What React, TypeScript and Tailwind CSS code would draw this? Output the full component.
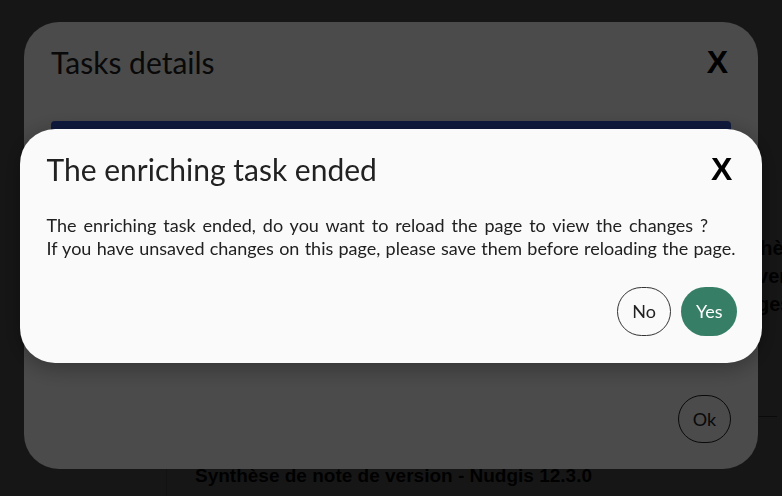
const CloseX = ({ className = '' }: { className?: string }) => (
  <button
    type="button"
    className={`font-['Liberation_Sans',Arial,sans-serif] text-[32px] font-bold leading-[36px] text-black ${className}`}
  >
    X
  </button>
);

// page behind both modals, only a few bits of it show through
const BackgroundPage = () => (
  <div className="flex h-full w-full font-['Liberation_Sans',Arial,sans-serif] text-[#111]">
    <aside className="w-[166px] shrink-0" />
    <main className="flex flex-1">
      <section className="flex w-[547px] flex-col justify-end">
        <article className="flex h-[190px] flex-col justify-end border-l border-[#c8c8c8] pb-[8px] pl-[28px]">
          <h1 className="text-[19px] font-bold leading-[24px]">
            Synthèse de note de version - Nudgis 12.3.0
          </h1>
        </article>
      </section>
      <section className="flex-1 overflow-hidden pt-[234px] pl-[4px] text-[20px] font-semibold leading-[28px] whitespace-nowrap">
        <p>Synthèse</p>
        <p>Les versions</p>
        <p>Les gestions</p>
        <div className="mt-[98px] ml-[42px] w-[18px] border-t border-[#777]" />
      </section>
    </main>
  </div>
);

const TasksDialog = () => (
  <div className="flex h-[447px] w-[calc(100%-48px)] flex-col rounded-[35px] bg-[#fafafa] px-[27px] pt-[22px] pb-[26px] text-[#212121]">
    <div className="flex items-center justify-between">
      <h2 className="text-[30px] leading-[36px]">Tasks details</h2>
      <CloseX className="mr-[3px]" />
    </div>
    <div className="mt-[41px] h-[44px] rounded-t-[4px] bg-[#3557cf]" />
    <div className="flex-1" />
    <div className="flex justify-end">
      <button
        type="button"
        className="flex h-[48px] w-[53px] items-center justify-center rounded-full border border-[#222] text-[18px] text-[#222]"
      >
        Ok
      </button>
    </div>
  </div>
);

const ConfirmDialog = () => (
  <div className="w-[95%] rounded-[35px] bg-[#fafafa] pt-[22px] pr-[25px] pb-[27px] pl-[27px] text-[#212121] shadow-[0_4px_24px_rgba(0,0,0,0.35)]">
    <div className="flex items-center justify-between">
      <h2 className="text-[30px] leading-[36px]">The enriching task ended</h2>
      <CloseX className="mr-[5px]" />
    </div>
    <div className="mt-[27px] text-[18px] leading-[23px] whitespace-nowrap">
      <p className="[word-spacing:2.35px]">
        The enriching task ended, do you want to reload the page to view the changes ?
      </p>
      <p className="[word-spacing:0.65px]">
        If you have unsaved changes on this page, please save them before reloading the page.
      </p>
    </div>
    <div className="mt-[27px] flex justify-end gap-[10px]">
      <button
        type="button"
        className="flex h-[49px] items-center rounded-full border border-[#333] px-[14px] text-[18px] text-[#222]"
      >
        No
      </button>
      <button
        type="button"
        className="flex h-[49px] items-center rounded-full bg-[#367f66] px-[15px] text-[18px] text-white"
      >
        Yes
      </button>
    </div>
  </div>
);

export default function App() {
  return (
    <div className="relative h-[496px] w-full overflow-hidden bg-white font-[Lato,sans-serif]">
      <BackgroundPage />
      <div className="fixed inset-0 flex justify-center bg-black/70 pt-[22px]">
        <TasksDialog />
      </div>
      <div className="fixed inset-0 flex items-center justify-center bg-black/70 pb-[4px]">
        <ConfirmDialog />
      </div>
    </div>
  );
}
